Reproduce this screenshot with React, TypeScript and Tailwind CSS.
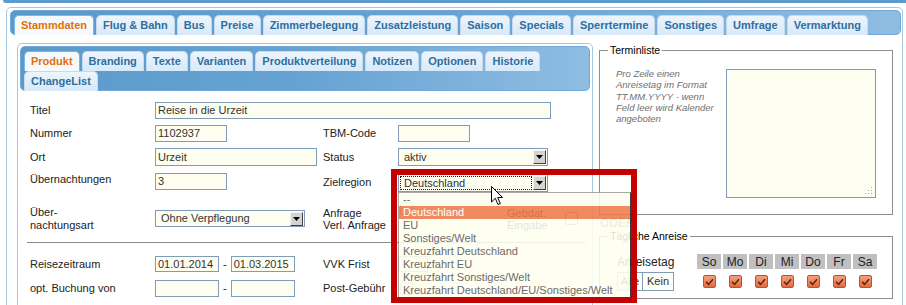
import React from "react";

const topTabs = ["Stammdaten", "Flug & Bahn", "Bus", "Preise", "Zimmerbelegung", "Zusatzleistung", "Saison", "Specials", "Sperrtermine", "Sonstiges", "Umfrage", "Vermarktung"];
const subRow1 = ["Produkt", "Branding", "Texte", "Varianten", "Produktverteilung", "Notizen", "Optionen", "Historie"];
const days = ["So", "Mo", "Di", "Mi", "Do", "Fr", "Sa"];
const regions = ["--", "Deutschland", "EU", "Sonstiges/Welt", "Kreuzfahrt Deutschland", "Kreuzfahrt EU", "Kreuzfahrt Sonstiges/Welt", "Kreuzfahrt Deutschland/EU/Sonstiges/Welt"];

function Tab({ label, active }: { label: string; active?: boolean }) {
  return (
    <div
      className={
        active
          ? "h-[20px] px-[6px] flex items-center border border-b-0 border-[#79b7e7] rounded-t-[5px] bg-[#f7fafd] font-bold text-[11px] leading-none text-[#e17009] whitespace-nowrap"
          : "h-[20px] px-[6px] flex items-center border border-b-0 border-[#c5dbec] rounded-t-[5px] bg-gradient-to-b from-[#edf5fd] to-[#d8e9f9] font-bold text-[11px] leading-none text-[#2e6e9e] whitespace-nowrap"
      }
    >
      {label}
    </div>
  );
}

function Box({ className = "", children }: { className?: string; children?: React.ReactNode }) {
  return (
    <div className={"flex items-center border border-[#7f9db9] bg-[#fefef0] pl-[2px] text-[11px] leading-none text-[#333] whitespace-nowrap overflow-hidden " + className}>
      {children}
    </div>
  );
}

function Arrow() {
  return (
    <div className="w-[13px] h-[14px] shrink-0 flex items-center justify-center bg-[#d4d4d4] border border-[#f4f4f4] border-r-[#404040] border-b-[#404040]">
      <svg width="7" height="4" viewBox="0 0 7 4">
        <path d="M0 0H7L3.5 4Z" fill="#000" />
      </svg>
    </div>
  );
}

function Select({ className = "", text, focused }: { className?: string; text: string; focused?: boolean }) {
  return (
    <div className={"flex items-stretch border border-[#7f9db9] bg-[#fefef0] p-[1px] " + className}>
      <div
        className={
          focused
            ? "flex-1 flex items-center pl-[3px] border border-dotted border-[#222] text-[11px] leading-none text-[#333] whitespace-nowrap"
            : "flex-1 flex items-center pl-[3px] border border-transparent text-[11px] leading-none text-[#333] whitespace-nowrap"
        }
      >
        {text}
      </div>
      <div className="ml-[1px] flex items-center">
        <Arrow />
      </div>
    </div>
  );
}

function EmptyCheck({ className = "" }: { className?: string }) {
  return <div className={"w-[13px] h-[13px] rounded-[2px] border border-[#8a8a8a] bg-white " + className} />;
}

function Check() {
  return (
    <div className="w-[13px] h-[13px] rounded-[2px] border border-[#b5562c] bg-gradient-to-b from-[#f3a07a] to-[#e36a3c] flex items-center justify-center">
      <svg width="9" height="8" viewBox="0 0 9 8">
        <path d="M1 3.8 L3.6 6.4 L8 1.2" stroke="#5a2712" strokeWidth="1.6" fill="none" />
      </svg>
    </div>
  );
}

const row = "grid grid-cols-[125px_168px_75px_1fr] items-center";

export default function App() {
  return (
    <div className="relative w-[906px] h-[305px] overflow-hidden bg-white font-['Liberation_Sans',Arial,sans-serif] text-[11px] text-[#222]">
      <div className="ml-[3px] h-[3px] rounded-bl-[4px] bg-[#5c9ccc]" />
      <div className="mt-[4px] ml-[6px] w-[897px] h-[320px] border border-[#a6c9e2] rounded-t-[5px]">
        {/* main tab header */}
        <div className="mt-[2px] ml-[3px] w-[891px] h-[25px] rounded-[5px] border border-[#6fa8d9] bg-gradient-to-r from-[#5a9acb] via-[#66a3d3] to-[#8fbde2] pl-[3px] pt-[4px] flex gap-[2px]">
          {topTabs.map((t, i) => (
            <Tab key={t} label={t} active={i === 0} />
          ))}
        </div>

        <div className="flex items-start pt-[8px] pl-[10px]">
          {/* left sub panel */}
          <div className="w-[576px] h-[300px] border border-[#a6c9e2] rounded-[5px] p-[2px]">
            <div className="h-[45px] rounded-[5px] border border-[#6fa8d9] bg-gradient-to-r from-[#5a9acb] via-[#66a3d3] to-[#8fbde2] pl-[3px] pt-[4px]">
              <div className="flex gap-[2px]">
                {subRow1.map((t, i) => (
                  <Tab key={t} label={t} active={i === 0} />
                ))}
              </div>
              <div className="flex gap-[2px]">
                <Tab label="ChangeList" />
              </div>
            </div>

            <div className="pt-[11px] pl-[10px] pr-[4px]">
              <div className={row + " h-[17px]"}>
                <div>Titel</div>
                <div className="col-span-3">
                  <Box className="w-[396px] h-[17px]">Reise in die Urzeit</Box>
                </div>
              </div>

              <div className={row + " h-[17px] mt-[6px]"}>
                <div>Nummer</div>
                <Box className="w-[72px] h-[17px]">1102937</Box>
                <div>TBM-Code</div>
                <Box className="w-[72px] h-[17px]" />
              </div>

              <div className={row + " h-[18px] mt-[6px]"}>
                <div>Ort</div>
                <Box className="w-[162px] h-[18px]">Urzeit</Box>
                <div>Status</div>
                <Select className="w-[150px] h-[18px]" text="aktiv" />
              </div>

              <div className={row + " h-[19px] mt-[7px]"}>
                <div className="self-start leading-[13px]">Übernachtungen</div>
                <Box className="w-[72px] h-[17px] self-start">3</Box>
                <div>Zielregion</div>
                <Select className="w-[150px] h-[18px] self-end" text="Deutschland" focused />
              </div>

              <div className={row + " h-[27px] mt-[13px]"}>
                <div className="leading-[13px]">
                  Über-
                  <br />
                  nachtungsart
                </div>
                <Select className="w-[150px] h-[17px]" text="Ohne Verpflegung" />
                <div className="leading-[12px]">
                  Anfrage
                  <br />
                  Verl. Anfrage
                </div>
                <div className="flex items-center h-full">
                  <EmptyCheck className="self-start -mt-[3px] ml-[2px]" />
                  <div className="ml-[94px] w-[58px] leading-[12px] text-[#222]">
                    Gebdat.
                    <br />
                    Eingabe
                  </div>
                  <EmptyCheck />
                </div>
              </div>

              <div className="mt-[10px] -ml-[3px] border-t border-[#8a8a8a]" />

              <div className={row + " h-[16px] mt-[13px]"}>
                <div>Reisezeitraum</div>
                <div className="flex items-center">
                  <Box className="w-[64px] h-[16px]">01.01.2014</Box>
                  <span className="mx-[4px]">-</span>
                  <Box className="w-[64px] h-[16px]">01.03.2015</Box>
                </div>
                <div>VVK Frist</div>
                <Box className="w-[30px] h-[16px]" />
              </div>

              <div className={row + " h-[17px] mt-[8px]"}>
                <div>opt. Buchung von</div>
                <div className="flex items-center">
                  <Box className="w-[64px] h-[17px]" />
                  <span className="mx-[4px]">-</span>
                  <Box className="w-[64px] h-[17px]" />
                </div>
                <div>Post-Gebühr</div>
                <EmptyCheck className="ml-[2px]" />
              </div>
            </div>
          </div>

          {/* right column */}
          <div className="ml-[6px] w-[294px] mt-[1px]">
            <fieldset className="border border-[#8c8c8c] pl-[16px] pr-[15px] pt-[12px] pb-[16px]">
              <legend className="-ml-[8px] px-[2px] text-[10.5px] leading-[12px] text-black">Terminliste</legend>
              <div className="flex items-start">
                <div className="w-[110px] italic text-[9.5px] leading-[11.3px] text-[#707070]">
                  <div>Pro Zeile einen</div>
                  <div>Anreisetag im Format</div>
                  <div>TT.MM.YYYY - wenn</div>
                  <div>Feld leer wird Kalender</div>
                  <div>angeboten</div>
                </div>
                <div className="mt-[1px] w-[150px] h-[129px] border border-[#7f9db9] bg-[#fefef0] flex items-end justify-end p-[2px]">
                  <svg width="8" height="8" viewBox="0 0 8 8">
                    <rect x="6" y="0" width="1" height="1" fill="#aaa" />
                    <rect x="3" y="3" width="1" height="1" fill="#aaa" />
                    <rect x="6" y="3" width="1" height="1" fill="#aaa" />
                    <rect x="0" y="6" width="1" height="1" fill="#aaa" />
                    <rect x="3" y="6" width="1" height="1" fill="#aaa" />
                    <rect x="6" y="6" width="1" height="1" fill="#aaa" />
                  </svg>
                </div>
              </div>
            </fieldset>

            <div className="mt-[1px] pl-[1px] h-[14px] leading-[14px] font-bold text-[12px] text-[#8a8a8a]">ODER</div>

            <fieldset className="border border-[#8c8c8c] pl-[17px] pt-[12px] pb-[7px]">
              <legend className="-ml-[9px] px-[2px] text-[10.5px] leading-[12px] text-black">Tägliche Anreise</legend>
              <div className="grid grid-cols-[78px_repeat(7,24px)] grid-rows-[15px_19px] gap-x-[2px] gap-y-[3px]">
                <div className="flex items-center text-[12px] text-[#222]">Anreisetag</div>
                {days.map((d) => (
                  <div key={d} className="flex items-center justify-center bg-[#c0c0c0] text-[12px] text-[#222]">
                    {d}
                  </div>
                ))}
                <div className="flex">
                  <div className="h-[19px] w-[26px] flex items-center justify-center border border-[#7f9db9] bg-[#fefef6] text-[#333]">Alle</div>
                  <div className="h-[19px] w-[31px] flex items-center justify-center border border-l-0 border-[#7f9db9] bg-[#fefef6] text-[#333]">Kein</div>
                </div>
                {days.map((d) => (
                  <div key={d + "c"} className="flex items-center justify-center">
                    <Check />
                  </div>
                ))}
              </div>
            </fieldset>
          </div>
        </div>
      </div>

      {/* open dropdown list */}
      <div className="absolute left-[398px] top-[192px] w-[233px] opacity-[0.88] bg-[#fffff0] border border-[#9a9a9a] border-r-[#222] border-b-[#222]">
        {regions.map((r, i) => (
          <div
            key={r}
            className={
              i === 1
                ? "h-[13px] pl-[4px] flex items-center bg-[#ef7c4c] text-white text-[11px] leading-none whitespace-nowrap"
                : "h-[13px] pl-[4px] flex items-center text-[#555] text-[11px] leading-none whitespace-nowrap"
            }
          >
            {r}
          </div>
        ))}
      </div>

      {/* red annotation frame */}
      <div className="absolute left-[391px] top-[169px] w-[246px] h-[134px] border-[6px] border-[#c40000]" />

      {/* mouse cursor */}
      <svg className="absolute left-[491px] top-[186px]" width="13" height="20" viewBox="0 0 13 20">
        <path d="M0.5 0.5 L0.5 16 L4.3 12.3 L7 18.5 L9.3 17.5 L6.7 11.5 L11.5 11.5 Z" fill="#fff" stroke="#000" strokeWidth="1" />
      </svg>
    </div>
  );
}
